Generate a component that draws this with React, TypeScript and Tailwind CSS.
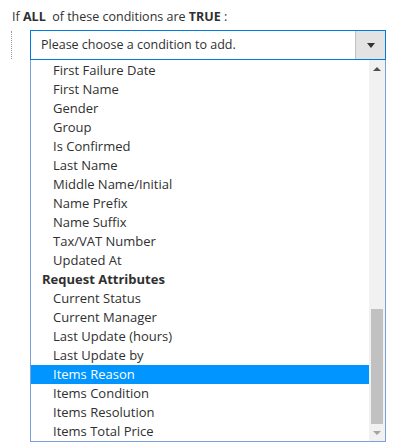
import React from "react";

const items: { label: string; group?: boolean; selected?: boolean }[] = [
  { label: "First Failure Date" },
  { label: "First Name" },
  { label: "Gender" },
  { label: "Group" },
  { label: "Is Confirmed" },
  { label: "Last Name" },
  { label: "Middle Name/Initial" },
  { label: "Name Prefix" },
  { label: "Name Suffix" },
  { label: "Tax/VAT Number" },
  { label: "Updated At" },
  { label: "Request Attributes", group: true },
  { label: "Current Status" },
  { label: "Current Manager" },
  { label: "Last Update (hours)" },
  { label: "Last Update by" },
  { label: "Items Reason", selected: true },
  { label: "Items Condition" },
  { label: "Items Resolution" },
  { label: "Items Total Price" },
];

export default function App() {
  return (
    <div
      className="w-[396px] h-[448px] bg-white text-[#303030] text-[13px]"
      style={{ fontFamily: '"Open Sans", sans-serif' }}
    >
      <div className="pt-[7px] pl-[12px] leading-[20px] text-[12.5px]">
        If <b>ALL</b>&nbsp; of these conditions are <b>TRUE</b> :
      </div>
      <div className="flex mt-[3px]">
        <div className="w-[11px] shrink-0" />
        <div className="w-[1px] h-[28px] mt-[1px] border-l border-dotted border-[#999]" />
        <div className="w-[18px] shrink-0" />
        <div className="w-[356px] flex flex-col">
          <div className="h-[30px] border border-[#007bdb] flex items-center">
            <div className="flex-1 pl-[10px] leading-[28px] text-[12.5px]">Please choose a condition to add.</div>
            <div className="w-[30px] h-full bg-[#e3e3e3] border-l border-[#c2c2c2] flex items-center justify-center">
              <div className="w-0 h-0 border-l-[4px] border-r-[4px] border-t-[5px] border-l-transparent border-r-transparent border-t-[#333]" />
            </div>
          </div>
          <div className="h-[382px] border-l border-r border-b border-[#7aa2d6] flex overflow-hidden pt-[1px]">
            <div className="flex-1 flex flex-col">
              {items.map((it) => (
                <div
                  key={it.label}
                  className={
                    "h-[19px] leading-[19px] whitespace-nowrap " +
                    (it.group
                      ? "pl-[11px] font-bold"
                      : it.selected
                      ? "pl-[22px] bg-[#0095ff] text-white"
                      : "pl-[22px]")
                  }
                >
                  {it.label}
                </div>
              ))}
            </div>
            <div className="w-[16px] bg-[#f1f1f1] flex flex-col items-center -mt-[1px]">
              <div className="h-[17px] w-full flex items-center justify-center">
                <div className="w-0 h-0 border-l-[4px] border-r-[4px] border-b-[4px] border-l-transparent border-r-transparent border-b-[#505050]" />
              </div>
              <div className="flex-1 w-full flex flex-col justify-end px-[2px]">
                <div className="h-[115px] bg-[#c1c1c1]" />
              </div>
              <div className="h-[17px] w-full flex items-center justify-center">
                <div className="w-0 h-0 border-l-[4px] border-r-[4px] border-t-[4px] border-l-transparent border-r-transparent border-t-[#a3a3a3]" />
              </div>
            </div>
          </div>
        </div>
      </div>
    </div>
  );
}
